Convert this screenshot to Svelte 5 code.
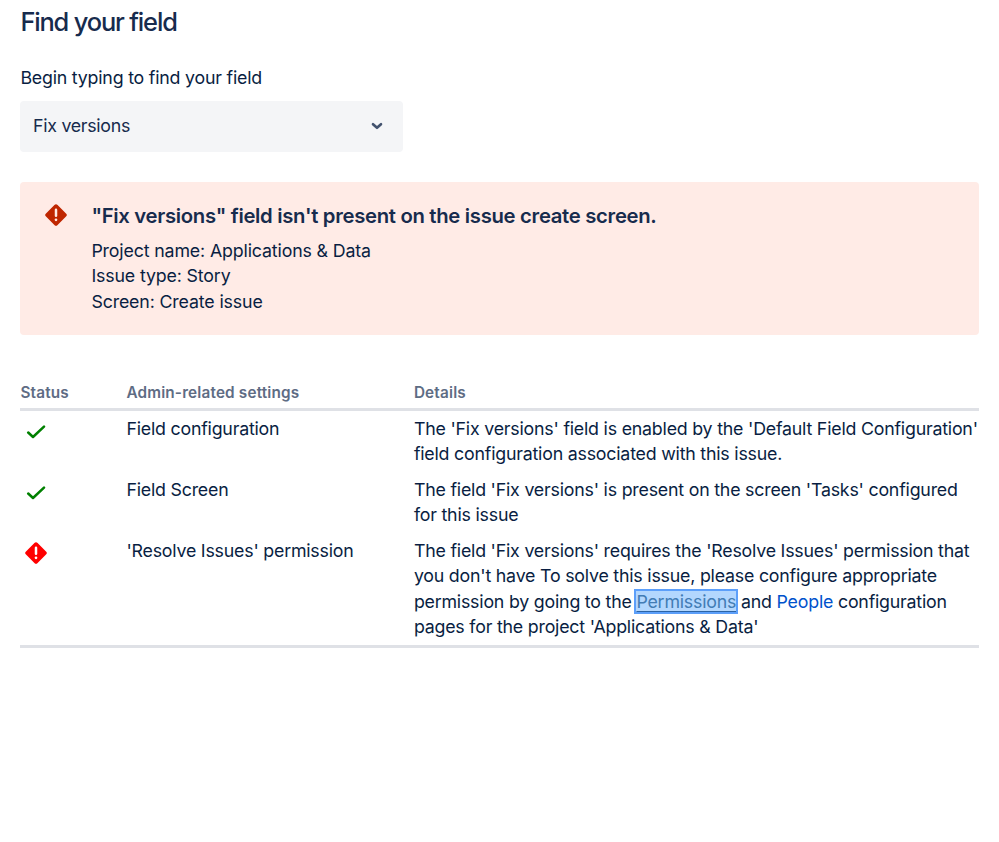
<script>
	let selected = $state('Fix versions');

	const info = [
		{ label: 'Project name', value: 'Applications & Data' },
		{ label: 'Issue type', value: 'Story' },
		{ label: 'Screen', value: 'Create issue' }
	];
</script>

{#snippet errorIcon()}
	<svg class="error-icon" viewBox="0 0 22 22" aria-hidden="true">
		<path d="M9.4 1 1 9.4a2.2 2.2 0 0 0 0 3.2L9.4 21a2.2 2.2 0 0 0 3.2 0L21 12.6a2.2 2.2 0 0 0 0-3.2L12.6 1a2.2 2.2 0 0 0-3.2 0z" fill="currentColor" />
		<path class="mark" d="M11 5.8v6" stroke-width="2.5" stroke-linecap="round" />
		<circle class="dot" cx="11" cy="15.8" r="1.35" />
	</svg>
{/snippet}

{#snippet checkIcon()}
	<svg class="check-icon" viewBox="0 0 20 14" aria-hidden="true">
		<path d="M2.2 7.5 7 12 18 1.6" fill="none" stroke="currentColor" stroke-width="2.5" stroke-linecap="round" stroke-linejoin="round" />
	</svg>
{/snippet}

<main>
	<h1>Find your field</h1>

	<div class="label" id="field-label">Begin typing to find your field</div>
	<button class="select" aria-labelledby="field-label">
		<span>{selected}</span>
		<svg class="chevron" viewBox="0 0 12 8" aria-hidden="true">
			<path d="M2 2.2 6 5.8 10 2.2" fill="none" stroke="currentColor" stroke-width="2.6" stroke-linecap="round" stroke-linejoin="round" />
		</svg>
	</button>

	<section class="banner">
		{@render errorIcon()}
		<div>
			<h2>"{selected}" field isn't present on the issue create screen.</h2>
			{#each info as item}
				<div class="info">{item.label}: {item.value}</div>
			{/each}
		</div>
	</section>

	<table>
		<thead>
			<tr>
				<th class="status">Status</th>
				<th class="setting">Admin-related settings</th>
				<th>Details</th>
			</tr>
		</thead>
		<tbody>
			<tr>
				<td class="ok">{@render checkIcon()}</td>
				<td>Field configuration</td>
				<td>
					The '{selected}' field is enabled by the 'Default Field Configuration'<br />
					field configuration associated with this issue.
				</td>
			</tr>
			<tr>
				<td class="ok">{@render checkIcon()}</td>
				<td>Field Screen</td>
				<td>
					The field '{selected}' is present on the screen 'Tasks' configured<br />
					for this issue
				</td>
			</tr>
			<tr>
				<td class="failed">{@render errorIcon()}</td>
				<td>'Resolve Issues' permission</td>
				<td>
					The field '{selected}' requires the 'Resolve Issues' permission that<br />
					you don't have To solve this issue, please configure appropriate<br />
					permission by going to the <a class="focused" href="#permissions">Permissions</a> and <a href="#people">People</a> configuration<br />
					pages for the project 'Applications &amp; Data'
				</td>
			</tr>
		</tbody>
	</table>
</main>

<style>
	:global(body) {
		margin: 0;
		background: #fff;
	}

	main {
		box-sizing: border-box;
		width: 999px;
		height: 842px;
		padding: 6px 20px 0 20.4px;
		overflow: hidden;
		color: #172b4d;
		font-family: Inter, 'Liberation Sans', sans-serif;
		font-size: 17.8px;
		line-height: 25.5px;
		white-space: nowrap;
		letter-spacing: -0.21px;
	}

	h1 {
		margin: 0 0 28px;
		font-size: 25.4px;
		line-height: 31px;
		font-weight: 540;
		letter-spacing: -1.15px;
	}

	.label {
		margin-bottom: 10px;
		color: #091e42;
	}

	.select {
		display: flex;
		align-items: center;
		justify-content: space-between;
		box-sizing: border-box;
		width: 382.5px;
		height: 51px;
		padding: 0 20px 0 12.6px;
		border: none;
		border-radius: 4px;
		background: #f4f5f7;
		color: #172b4d;
		font: inherit;
		letter-spacing: -0.28px;
	}

	.chevron {
		width: 12px;
		height: 8px;
		color: #42526e;
	}

	.banner {
		display: flex;
		box-sizing: border-box;
		height: 153px;
		margin-top: 30.5px;
		padding: 21px 25px;
		border-radius: 4px;
		background: #ffebe6;
	}

	.error-icon {
		display: block;
		flex: none;
		width: 22px;
		height: 22px;
	}

	.mark {
		stroke: #fff;
	}

	.dot {
		fill: #fff;
	}

	.banner .error-icon {
		margin: 1px 24px 0 0;
		color: #bf2600;
	}

	.banner .mark {
		stroke: #ffebe6;
	}

	.banner .dot {
		fill: #ffebe6;
	}

	h2 {
		margin: 0 0 8.8px;
		font-size: 20.3px;
		line-height: 26px;
		font-weight: 600;
		letter-spacing: -0.31px;
	}

	.info {
		color: #091e42;
		letter-spacing: -0.15px;
	}

	table {
		width: 100%;
		margin-top: 45px;
		border-collapse: separate;
		border-spacing: 0;
		table-layout: fixed;
		border-bottom: 3px solid #dfe1e6;
	}

	th {
		padding: 0 0 2px;
		border-bottom: 3px solid #dfe1e6;
		color: #5e6c84;
		font-size: 15.3px;
		font-weight: 600;
		text-align: left;
		letter-spacing: 0.18px;
	}

	.status {
		width: 106px;
	}

	.setting {
		width: 287.5px;
	}

	td {
		padding: 5px 0;
		color: #091e42;
		vertical-align: top;
	}

	.check-icon {
		display: block;
		width: 20px;
		height: 14px;
		margin: 9px 0 0 5.5px;
	}

	/* scoped by cell so the icons win over the default cell colour */
	td.ok {
		color: #008000;
	}

	td.failed {
		color: #f00;
	}

	.failed .error-icon {
		margin: 4px 0 0 4.5px;
	}

	a {
		color: #0052cc;
		text-decoration: none;
	}

	.focused {
		background: #b3d7fe;
		color: #427cb5;
		outline: 2px solid #5c9ffa;
		text-decoration: underline;
		text-decoration-color: #2c64a5;
		text-underline-offset: 3px;
	}
</style>
